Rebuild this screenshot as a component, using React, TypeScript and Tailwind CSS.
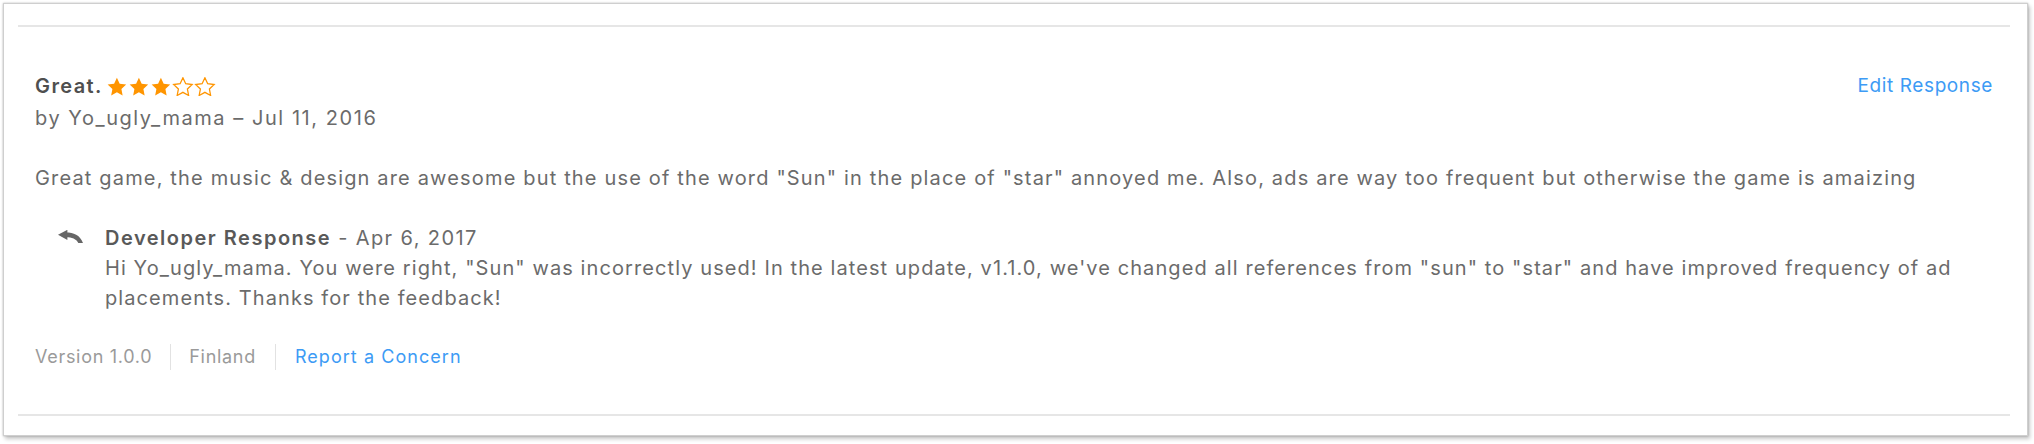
import React from "react";

function Star({ filled }: { filled: boolean }) {
  return (
    <svg width="22" height="19" viewBox="1.6 1.8 21 19.4" className="shrink-0">
      <path
        d="M12 2.6l2.85 6.05 6.6.85-4.85 4.6 1.25 6.55L12 17.45l-5.85 3.2 1.25-6.55-4.85-4.6 6.6-.85L12 2.6z"
        fill={filled ? "#ff9500" : "none"}
        stroke="#ff9500"
        strokeWidth={filled ? 0 : 1.3}
        strokeLinejoin="miter"
      />
    </svg>
  );
}

function ReplyArrow() {
  return (
    <svg width="25" height="13" viewBox="0 0 25 13" className="shrink-0">
      <polygon points="0,4.8 9.4,-0.2 9.4,10" fill="#666" />
      <path d="M8 2.4 C15.5 2.4 21.9 4.7 25 13 L20.3 13 C18.2 9 14 7.3 8 7.3 Z" fill="#666" />
    </svg>
  );
}

export default function App() {
  return (
    <div className="w-[2034px] h-[444px] bg-white font-['Inter',sans-serif]">
      <div className="ml-[3px] mt-[3px] w-[2025px] h-[433px] bg-white border border-[#cfcfcf] shadow-[0_0_2px_rgba(0,0,0,0.25),2px_3px_4px_rgba(0,0,0,0.22)] pl-[14px] pr-[17px] pt-[21px] flex flex-col">
        <div className="h-[2px] bg-[#e6e6e6]" />
        <div className="px-[17px] mt-[43px] flex flex-col">
          <div className="flex items-start justify-between">
            <div className="flex flex-col">
              <div className="flex items-center h-[32px] text-[20px] leading-[32px]">
                <span className="font-semibold text-[#4f4f4f] tracking-[1.4px]">Great.</span>
                <span className="ml-[3px] flex items-center">
                  <Star filled />
                  <Star filled />
                  <Star filled />
                  <Star filled={false} />
                  <Star filled={false} />
                </span>
              </div>
              <div className="text-[20px] leading-[32px] text-[#6b6b6b] tracking-[1.55px]">by Yo_ugly_mama – Jul 11, 2016</div>
            </div>
            <a className="text-[19px] leading-[32px] text-[#3d9bf5] tracking-[0.6px]">Edit Response</a>
          </div>
          <p className="mt-[28px] text-[20px] leading-[32px] text-[#6b6b6b] tracking-[1.16px]">
            Great game, the music &amp; design are awesome but the use of the word "Sun" in the place of "star" annoyed me. Also, ads are way too frequent but otherwise the game is amaizing
          </p>
          <div className="mt-[29px] flex items-start">
            <div className="w-[70px] pl-[23px] pt-[7px] shrink-0">
              <ReplyArrow />
            </div>
            <div className="text-[20px] leading-[30px] text-[#6b6b6b] tracking-[1.09px]">
              <div>
                <span className="font-semibold text-[#595959] tracking-[1.5px]">Developer Response</span>
                <span className="tracking-[1.4px]"> - Apr 6, 2017</span>
              </div>
              <p>
                Hi Yo_ugly_mama. You were right, "Sun" was incorrectly used! In the latest update, v1.1.0, we've changed all references from "sun" to "star" and have improved frequency of ad placements. Thanks for the feedback!
              </p>
            </div>
          </div>
          <div className="mt-[29px] flex items-center h-[30px] text-[18px] leading-[30px] tracking-[0.7px]">
            <span className="text-[#9a9a9a]">Version 1.0.0</span>
            <span className="mx-[18px] w-px h-[26px] bg-[#e2e2e2]" />
            <span className="text-[#9a9a9a]">Finland</span>
            <span className="mx-[19px] w-px h-[26px] bg-[#e2e2e2]" />
            <a className="text-[#3d9bf5] tracking-[1.05px]">Report a Concern</a>
          </div>
        </div>
        <div className="mt-[42px] h-[2px] bg-[#e6e6e6]" />
      </div>
    </div>
  );
}
